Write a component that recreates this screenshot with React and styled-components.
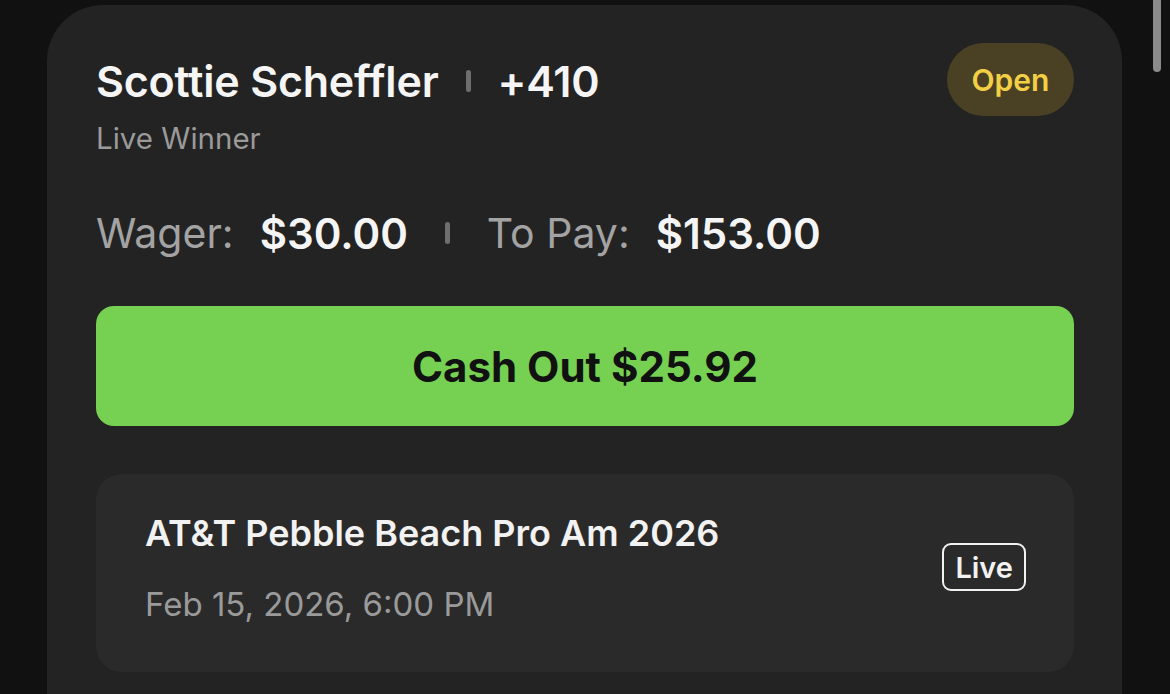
import React from "react";
import styled, { createGlobalStyle } from "styled-components";

const Global = createGlobalStyle`
  html, body { margin: 0; padding: 0; background: #111111; height: 100%; overflow: hidden; }
  body { font-family: Inter, "Noto Sans", sans-serif; -webkit-font-smoothing: antialiased; }
  #root { height: 100%; }
`;

const Page = styled.div`
  height: 694px;
  display: flex;
  padding: 5px 48px 0 47px;
  box-sizing: border-box;
  position: relative;
  overflow: hidden;
`;

const Card = styled.div`
  flex: 1;
  background: #232323;
  border-radius: 56px 56px 0 0;
  padding: 38px 48px 0 49px;
  display: flex;
  flex-direction: column;
  height: 800px;
  box-sizing: border-box;
`;

const Header = styled.div`
  display: flex;
  justify-content: space-between;
  align-items: flex-start;
`;

const TitleBlock = styled.div`
  display: flex;
  flex-direction: column;
`;

const TitleRow = styled.div`
  display: flex;
  align-items: center;
  gap: 27px;
  height: 73px;
  padding-top: 2px;
  box-sizing: border-box;
`;

const Title = styled.span`
  color: #f5f5f5;
  font-size: 43px;
  line-height: 52px;
  font-weight: 600;
  letter-spacing: -0.2px;
`;

const Divider = styled.span`
  display: inline-block;
  width: 5px;
  height: 22px;
  border-radius: 3px;
  background: #6e6e6e;
`;

const Subtitle = styled.div`
  color: #9a9a9a;
  font-size: 29.5px;
  line-height: 36px;
  font-weight: 400;
  margin-top: 4px;
`;

const StatusPill = styled.div`
  width: 127px;
  height: 73px;
  border-radius: 37px;
  background: #4a4124;
  color: #f2cf45;
  font-size: 30px;
  font-weight: 600;
  display: flex;
  align-items: center;
  justify-content: center;
`;

const Amounts = styled.div`
  display: flex;
  align-items: center;
  margin-top: 47px;
  height: 60px;
`;

const Label = styled.span`
  color: #a3a3a3;
  font-size: 41px;
  font-weight: 400;
  margin-right: 26px;
`;

const Value = styled.span`
  color: #f5f5f5;
  font-size: 42px;
  font-weight: 600;
`;

const AmountDivider = styled(Divider)`
  margin: 0 37px;
`;

const CashOut = styled.button`
  margin-top: 43px;
  height: 120px;
  border: none;
  border-radius: 18px;
  background: #76d152;
  color: #111111;
  font-family: Inter, "Noto Sans", sans-serif;
  font-size: 42px;
  font-weight: 700;
  display: flex;
  align-items: center;
  justify-content: center;
  cursor: pointer;
`;

const EventBox = styled.div`
  margin-top: 48px;
  height: 198px;
  border-radius: 26px;
  background: #2a2a2a;
  padding: 37px 48px 0 49px;
  display: flex;
  align-items: flex-start;
  justify-content: space-between;
  box-sizing: border-box;
`;

const EventInfo = styled.div`
  display: flex;
  flex-direction: column;
  gap: 29px;
`;

const EventTitle = styled.div`
  color: #f2f2f2;
  font-size: 36px;
  line-height: 44px;
  font-weight: 600;
`;

const EventDate = styled.div`
  color: #9a9a9a;
  font-size: 33px;
  line-height: 40px;
  font-weight: 400;
`;

const LiveTag = styled.div`
  border: 2.5px solid #f2f2f2;
  border-radius: 9px;
  padding: 0 11px;
  height: 48px;
  box-sizing: border-box;
  display: flex;
  align-items: center;
  color: #f2f2f2;
  font-size: 29px;
  font-weight: 600;
  margin-top: 32px;
`;

const Scrollbar = styled.div`
  position: absolute;
  right: 9px;
  top: -10px;
  width: 8px;
  height: 82px;
  border-radius: 4px;
  background: #8a8a8a;
`;

export default function App() {
  return (
    <>
      <Global />
      <Page>
        <Card>
          <Header>
            <TitleBlock>
              <TitleRow>
                <Title>Scottie Scheffler</Title>
                <Divider />
                <Title>+410</Title>
              </TitleRow>
              <Subtitle>Live Winner</Subtitle>
            </TitleBlock>
            <StatusPill>Open</StatusPill>
          </Header>
          <Amounts>
            <Label>Wager:</Label>
            <Value>$30.00</Value>
            <AmountDivider />
            <Label>To Pay:</Label>
            <Value>$153.00</Value>
          </Amounts>
          <CashOut>Cash Out $25.92</CashOut>
          <EventBox>
            <EventInfo>
              <EventTitle>AT&amp;T Pebble Beach Pro Am 2026</EventTitle>
              <EventDate>Feb 15, 2026, 6:00 PM</EventDate>
            </EventInfo>
            <LiveTag>Live</LiveTag>
          </EventBox>
        </Card>
        <Scrollbar />
      </Page>
    </>
  );
}
